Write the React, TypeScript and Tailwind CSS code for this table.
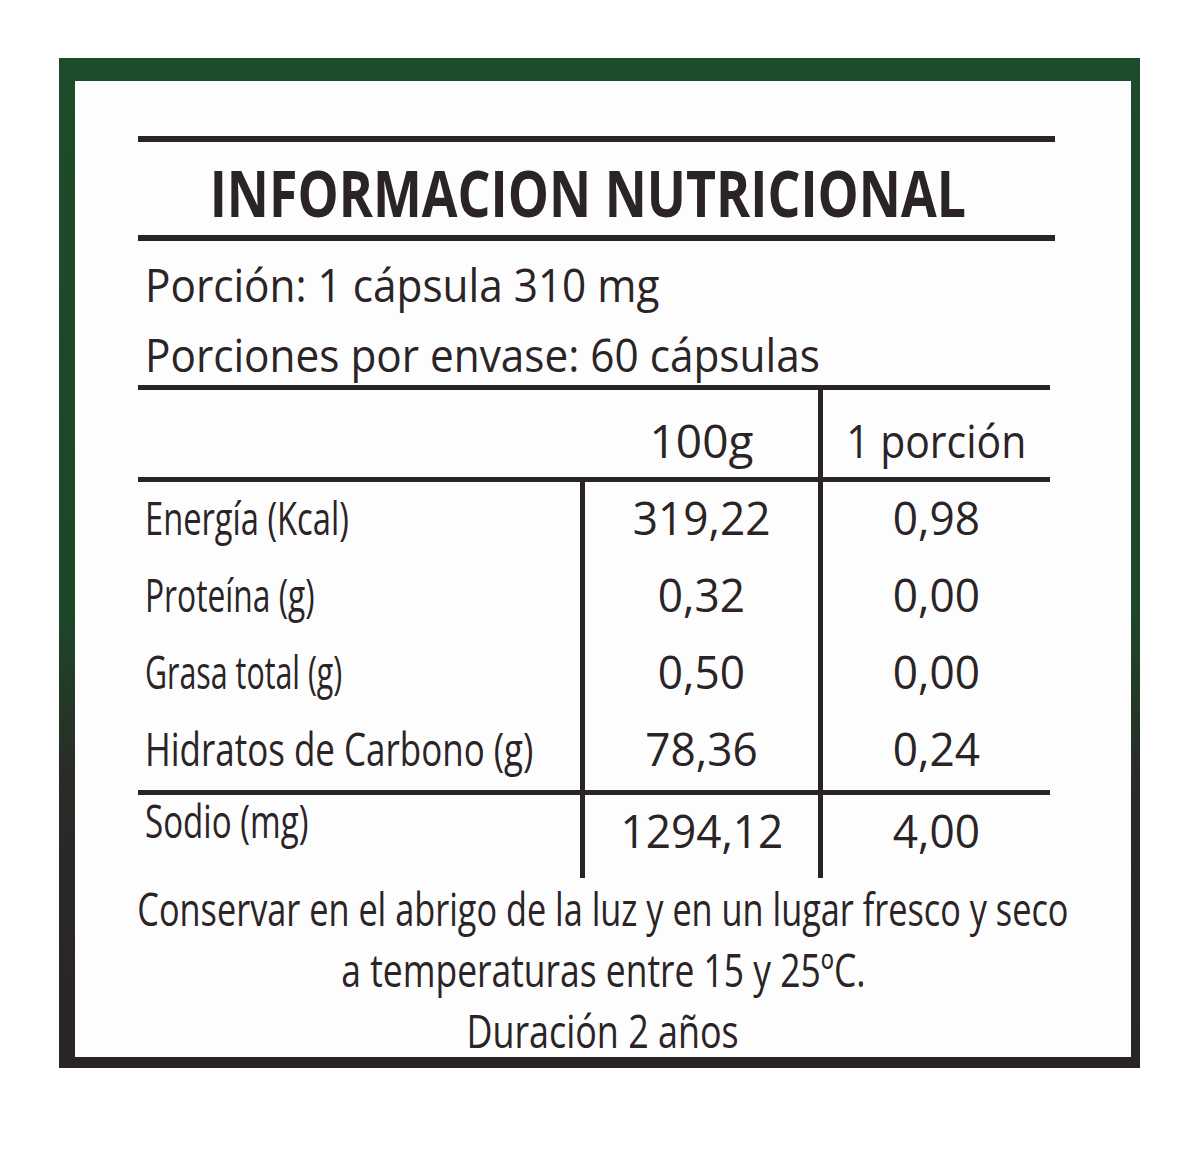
const rows = [
  { label: 'Energía (Kcal)', scale: 'scale-x-[0.71]', a: '319,22', b: '0,98' },
  { label: 'Proteína (g)', scale: 'scale-x-[0.69]', a: '0,32', b: '0,00' },
  { label: 'Grasa total (g)', scale: 'scale-x-[0.66]', a: '0,50', b: '0,00' },
  { label: 'Hidratos de Carbono (g)', scale: 'scale-x-[0.76]', a: '78,36', b: '0,24' },
]

export default function App() {
  return (
    <div className="w-[1200px] h-[1155px] overflow-hidden bg-white pt-[58px] pl-[59px] font-['Open_Sans',sans-serif] text-[#2a2426]">
      {/* marco verde / oscuro */}
      <div className="w-[1081px] h-[1010px] pt-[23px] pl-[16px] pr-[9px] pb-[11px] bg-[linear-gradient(to_bottom,#1c4c2a_0%,#1e4629_55%,#2a2a27_72%,#2a2426_100%)]">
        <div className="h-full bg-[#fdfdfd] pt-[55px] pl-[63px]">
          <div className="w-[917px]">
            <div className="h-[6px] bg-[#2a2426]" />

            <div className="h-[93px] flex items-end justify-center pr-[18px] pb-[10px]">
              <span className="inline-block whitespace-nowrap origin-center scale-x-[0.81] text-[64px] leading-none font-bold">
                INFORMACION NUTRICIONAL
              </span>
            </div>

            <div className="h-[6px] bg-[#2a2426]" />

            <div className="h-[144px]">
              <div className="h-[70px] flex items-end pl-[7px] pb-[4px]">
                <span className="inline-block whitespace-nowrap origin-left scale-x-[0.94] text-[45px] leading-none">
                  Porción: 1 cápsula 310 mg
                </span>
              </div>
              <div className="h-[70px] flex items-end pl-[7px] pb-[4px]">
                <span className="inline-block whitespace-nowrap origin-left scale-x-[0.94] text-[45px] leading-none">
                  Porciones por envase: 60 cápsulas
                </span>
              </div>
            </div>
          </div>

          <div className="w-[912px]">
            <div className="h-[5px] bg-[#2a2426]" />

            {/* cabecera */}
            <div className="grid grid-cols-[442px_238px_232px] h-[92px] border-b-[5px] border-[#2a2426]">
              <div />
              <div className="flex items-end justify-center pb-[14px] pl-[5px]">
                <span className="text-[46px] leading-none">100g</span>
              </div>
              <div className="flex items-end justify-center pb-[14px] border-l-[5px] border-[#2a2426]">
                <span className="inline-block whitespace-nowrap origin-center scale-x-[0.89] text-[46px] leading-none">
                  1 porción
                </span>
              </div>
            </div>

            {rows.map((r, i) => (
              <div
                key={r.label}
                className={`grid grid-cols-[442px_238px_232px] ${
                  i === rows.length - 1 ? 'h-[82px] border-b-[5px] border-[#2a2426]' : 'h-[77px]'
                }`}
              >
                <div className="flex items-end pl-[7px] pb-[19px]">
                  <span className={`inline-block whitespace-nowrap origin-left ${r.scale} text-[46px] leading-none`}>
                    {r.label}
                  </span>
                </div>
                <div className="flex items-end justify-center pb-[19px] border-l-[5px] border-[#2a2426]">
                  <span className="inline-block origin-center scale-x-[0.96] text-[46px] leading-none">{r.a}</span>
                </div>
                <div className="flex items-end justify-center pb-[19px] border-l-[5px] border-[#2a2426]">
                  <span className="inline-block origin-center scale-x-[0.96] text-[46px] leading-none">{r.b}</span>
                </div>
              </div>
            ))}

            <div className="grid grid-cols-[442px_238px_232px] h-[83px]">
              <div className="flex items-end pl-[7px] pb-[35px]">
                <span className="inline-block whitespace-nowrap origin-left scale-x-[0.72] text-[46px] leading-none">
                  Sodio (mg)
                </span>
              </div>
              <div className="flex items-end justify-center pb-[25px] border-l-[5px] border-[#2a2426]">
                <span className="inline-block origin-center scale-x-[0.96] text-[46px] leading-none">1294,12</span>
              </div>
              <div className="flex items-end justify-center pb-[25px] border-l-[5px] border-[#2a2426]">
                <span className="inline-block origin-center scale-x-[0.96] text-[46px] leading-none">4,00</span>
              </div>
            </div>
          </div>

          {/* pie */}
          <div className="w-[930px] flex flex-col items-center">
            <div className="h-[61px] flex items-end pb-[8px]">
              <span className="inline-block whitespace-nowrap origin-center scale-x-[0.745] text-[46px] leading-none">
                Conservar en el abrigo de la luz y en un lugar fresco y seco
              </span>
            </div>
            <div className="h-[61px] flex items-end pb-[8px]">
              <span className="inline-block whitespace-nowrap origin-center scale-x-[0.77] text-[46px] leading-none">
                a temperaturas entre 15 y 25ºC.
              </span>
            </div>
            <div className="h-[61px] flex items-end pb-[8px]">
              <span className="inline-block whitespace-nowrap origin-center scale-x-[0.78] text-[46px] leading-none">
                Duración 2 años
              </span>
            </div>
          </div>
        </div>
      </div>
    </div>
  )
}
